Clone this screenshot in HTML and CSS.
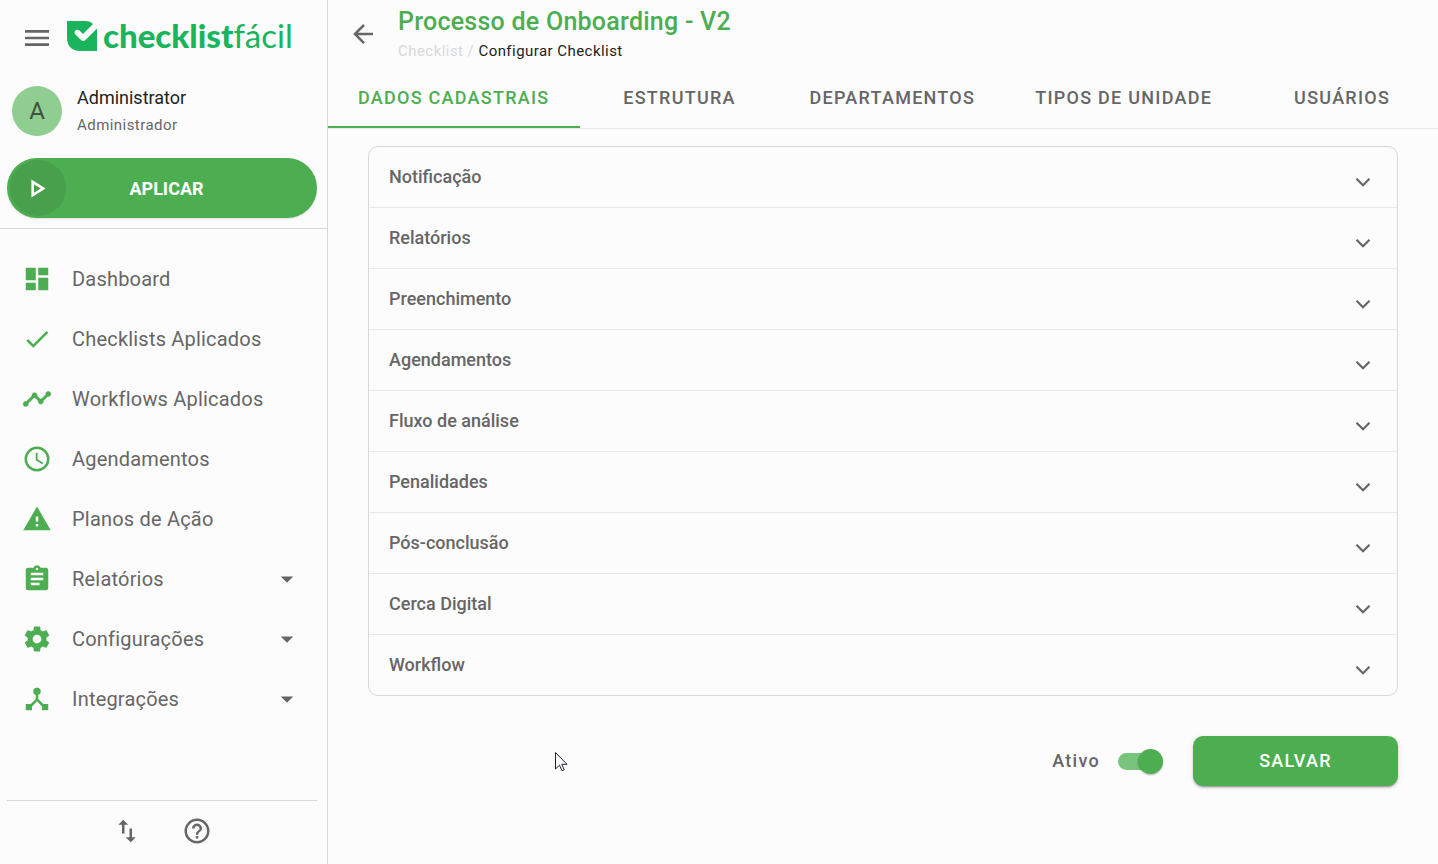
FILE: index.html
```html
<!DOCTYPE html>
<html lang="pt-BR">
<head>
  <meta charset="UTF-8">
  <meta name="viewport" content="width=device-width, initial-scale=1">
  <title>Processo de Onboarding - V2</title>
  <link rel="stylesheet" href="styles.css">
</head>
<body>
  <div class="app">
    <aside class="sidebar">
      <div class="brand">
        <button class="icon-btn" type="button" aria-label="Menu">
          <svg class="icon-lg" viewBox="0 0 24 24"><path d="M3,6H21V8H3V6M3,11H21V13H3V11M3,16H21V18H3V16Z"/></svg>
        </button>
        <a class="logo" href="#">
          <svg class="logo-mark" viewBox="0 0 30 30">
            <path d="M0 0H18C22 0 24 1 26 3L16 13L12.500 9.500C9.500 7 6 10.500 8.500 13.500L14 19C15.500 20.500 17 20.500 18.500 19L30 7.500V30H13C5 30 0 25 0 17Z"/>
          </svg>
          <span class="logo-text"><b>checklist</b>fácil</span>
        </a>
      </div>

      <div class="user">
        <div class="avatar">A</div>
        <div>
          <div class="user-name">Administrator</div>
          <div class="user-role">Administrador</div>
        </div>
      </div>

      <div class="apply">
        <button class="apply-btn" type="button">
          <span class="apply-icon">
            <svg class="icon" viewBox="0 0 24 24"><path d="M8.5,8.64L13.77,12L8.5,15.36V8.64M6.5,5V19L17.5,12"/></svg>
          </span>
          <span class="apply-label">APLICAR</span>
        </button>
      </div>

      <nav class="nav">
        <a class="nav-item" href="#">
          <svg class="icon" viewBox="0 0 24 24"><path d="M13,3V9H21V3M13,21H21V11H13M3,21H11V15H3M3,13H11V3H3V13Z"/></svg>
          <span class="nav-label">Dashboard</span>
        </a>
        <a class="nav-item" href="#">
          <svg class="icon" viewBox="0 0 24 24"><path d="M21,7L9,19L3.5,13.5L4.91,12.09L9,16.17L19.59,5.59L21,7Z"/></svg>
          <span class="nav-label">Checklists Aplicados</span>
        </a>
        <a class="nav-item" href="#">
          <svg class="icon" viewBox="0 0 24 24"><path stroke="currentColor" stroke-width=".5" d="M23,8C23,9.1 22.1,10 21,10C20.82,10 20.65,9.98 20.49,9.93L16.93,13.48C16.98,13.64 17,13.82 17,14C17,15.1 16.1,16 15,16C13.9,16 13,15.1 13,14C13,13.82 13.02,13.64 13.07,13.48L10.52,10.93C10.36,10.98 10.18,11 10,11C9.82,11 9.64,10.98 9.48,10.93L4.93,15.49C4.98,15.65 5,15.82 5,16C5,17.1 4.1,18 3,18C1.9,18 1,17.1 1,16C1,14.9 1.9,14 3,14C3.18,14 3.35,14.02 3.51,14.07L8.07,9.52C8.02,9.36 8,9.18 8,9C8,7.9 8.9,7 10,7C11.1,7 12,7.9 12,9C12,9.18 11.98,9.36 11.93,9.52L14.48,12.07C14.64,12.02 14.82,12 15,12C15.18,12 15.36,12.02 15.52,12.07L19.07,8.51C19.02,8.35 19,8.18 19,8C19,6.9 19.9,6 21,6C22.1,6 23,6.9 23,8Z"/></svg>
          <span class="nav-label">Workflows Aplicados</span>
        </a>
        <a class="nav-item" href="#">
          <svg class="icon" viewBox="0 0 24 24"><path d="M12,20A8,8 0 0,0 20,12A8,8 0 0,0 12,4A8,8 0 0,0 4,12A8,8 0 0,0 12,20M12,2A10,10 0 0,1 22,12A10,10 0 0,1 12,22C6.47,22 2,17.5 2,12A10,10 0 0,1 12,2M12.5,7V12.25L17,14.92L16.25,16.15L11,13V7H12.5Z"/></svg>
          <span class="nav-label">Agendamentos</span>
        </a>
        <a class="nav-item" href="#">
          <svg class="icon" viewBox="0 0 24 24"><path d="M13,14H11V10H13M13,18H11V16H13M1,21H23L12,2L1,21Z"/></svg>
          <span class="nav-label">Planos de Ação</span>
        </a>
        <a class="nav-item" href="#">
          <svg class="icon" viewBox="0 0 24 24"><path d="M17,9H7V7H17M17,13H7V11H17M14,17H7V15H14M12,3A1,1 0 0,1 13,4A1,1 0 0,1 12,5A1,1 0 0,1 11,4A1,1 0 0,1 12,3M19,3H14.82C14.4,1.84 13.3,1 12,1C10.7,1 9.6,1.84 9.18,3H5A2,2 0 0,0 3,5V19A2,2 0 0,0 5,21H19A2,2 0 0,0 21,19V5A2,2 0 0,0 19,3Z"/></svg>
          <span class="nav-label">Relatórios</span>
          <svg class="caret" viewBox="0 0 24 24"><path d="M7,10L12,15L17,10H7Z"/></svg>
        </a>
        <a class="nav-item" href="#">
          <svg class="icon" viewBox="0 0 24 24"><path d="M12,15.5A3.5,3.5 0 0,1 8.5,12A3.5,3.5 0 0,1 12,8.5A3.5,3.5 0 0,1 15.5,12A3.5,3.5 0 0,1 12,15.5M19.43,12.97C19.47,12.65 19.5,12.33 19.5,12C19.5,11.67 19.47,11.34 19.43,11L21.54,9.37C21.73,9.22 21.78,8.95 21.66,8.73L19.66,5.27C19.54,5.05 19.27,4.96 19.05,5.05L16.56,6.05C16.04,5.66 15.5,5.32 14.87,5.07L14.5,2.42C14.46,2.18 14.25,2 14,2H10C9.75,2 9.54,2.18 9.5,2.42L9.13,5.07C8.5,5.32 7.96,5.66 7.44,6.05L4.95,5.05C4.73,4.96 4.46,5.05 4.34,5.27L2.34,8.73C2.21,8.95 2.27,9.22 2.46,9.37L4.57,11C4.53,11.34 4.5,11.67 4.5,12C4.5,12.33 4.53,12.65 4.57,12.97L2.46,14.63C2.27,14.78 2.21,15.05 2.34,15.27L4.34,18.73C4.46,18.95 4.73,19.03 4.95,18.95L7.44,17.94C7.96,18.34 8.5,18.68 9.13,18.93L9.5,21.58C9.54,21.82 9.75,22 10,22H14C14.25,22 14.46,21.82 14.5,21.58L14.87,18.93C15.5,18.67 16.04,18.34 16.56,17.94L19.05,18.95C19.27,19.03 19.54,18.95 19.66,18.73L21.66,15.27C21.78,15.05 21.73,14.78 21.54,14.63L19.43,12.97Z"/></svg>
          <span class="nav-label">Configurações</span>
          <svg class="caret" viewBox="0 0 24 24"><path d="M7,10L12,15L17,10H7Z"/></svg>
        </a>
        <a class="nav-item" href="#">
          <svg class="icon" viewBox="0 0 24 24"><path d="M17,16L13,12V8.82C14.16,8.4 15,7.3 15,6A3,3 0 0,0 12,3A3,3 0 0,0 9,6C9,7.3 9.84,8.4 11,8.82V12L7,16H3V21H8V17.95L12,13.75L16,17.95V21H21V16H17Z"/></svg>
          <span class="nav-label">Integrações</span>
          <svg class="caret" viewBox="0 0 24 24"><path d="M7,10L12,15L17,10H7Z"/></svg>
        </a>
      </nav>

      <div class="sidebar-footer">
        <button class="icon-btn" type="button" aria-label="Transferências">
          <svg class="icon" viewBox="0 0 24 24"><path d="M9,3L5,7H8V14H10V7H13M16,17V10H14V17H11L15,21L19,17H16Z"/></svg>
        </button>
        <button class="icon-btn" type="button" aria-label="Ajuda">
          <svg class="icon" viewBox="0 0 24 24"><path d="M11,18H13V16H11V18M12,2A10,10 0 0,0 2,12A10,10 0 0,0 12,22A10,10 0 0,0 22,12A10,10 0 0,0 12,2M12,20C7.59,20 4,16.41 4,12C4,7.59 7.59,4 12,4C16.41,4 20,7.59 20,12C20,16.41 16.41,20 12,20M12,6A4,4 0 0,0 8,10H10A2,2 0 0,1 12,8A2,2 0 0,1 14,10C14,12 11,11.75 11,15H13C13,12.75 16,12.5 16,10A4,4 0 0,0 12,6Z"/></svg>
        </button>
      </div>
    </aside>

    <main class="main">
      <header class="page-header">
        <button class="icon-btn" type="button" aria-label="Voltar">
          <svg class="icon" viewBox="0 0 24 24"><path d="M20,11V13H8L13.5,18.5L12.08,19.92L4.16,12L12.08,4.08L13.5,5.5L8,11H20Z"/></svg>
        </button>
        <div class="page-heading">
          <h1 class="page-title">Processo de Onboarding - V2</h1>
          <div class="breadcrumb"><a href="#">Checklist</a> / <span class="current">Configurar Checklist</span></div>
        </div>
      </header>

      <div class="tabs" role="tablist">
        <button class="tab active" type="button" role="tab" aria-selected="true">DADOS CADASTRAIS</button>
        <button class="tab" type="button" role="tab">ESTRUTURA</button>
        <button class="tab" type="button" role="tab">DEPARTAMENTOS</button>
        <button class="tab" type="button" role="tab">TIPOS DE UNIDADE</button>
        <button class="tab" type="button" role="tab">USUÁRIOS</button>
      </div>

      <form class="content">
        <div class="panels">
          <button class="panel" type="button" aria-expanded="false">Notificação <svg class="chevron" viewBox="0 0 24 24"><path d="M6 9L12 15L18 9"/></svg></button>
          <button class="panel" type="button" aria-expanded="false">Relatórios <svg class="chevron" viewBox="0 0 24 24"><path d="M6 9L12 15L18 9"/></svg></button>
          <button class="panel" type="button" aria-expanded="false">Preenchimento <svg class="chevron" viewBox="0 0 24 24"><path d="M6 9L12 15L18 9"/></svg></button>
          <button class="panel" type="button" aria-expanded="false">Agendamentos <svg class="chevron" viewBox="0 0 24 24"><path d="M6 9L12 15L18 9"/></svg></button>
          <button class="panel" type="button" aria-expanded="false">Fluxo de análise <svg class="chevron" viewBox="0 0 24 24"><path d="M6 9L12 15L18 9"/></svg></button>
          <button class="panel" type="button" aria-expanded="false">Penalidades <svg class="chevron" viewBox="0 0 24 24"><path d="M6 9L12 15L18 9"/></svg></button>
          <button class="panel" type="button" aria-expanded="false">Pós-conclusão <svg class="chevron" viewBox="0 0 24 24"><path d="M6 9L12 15L18 9"/></svg></button>
          <button class="panel" type="button" aria-expanded="false">Cerca Digital <svg class="chevron" viewBox="0 0 24 24"><path d="M6 9L12 15L18 9"/></svg></button>
          <button class="panel" type="button" aria-expanded="false">Workflow <svg class="chevron" viewBox="0 0 24 24"><path d="M6 9L12 15L18 9"/></svg></button>
        </div>

        <div class="actions">
          <label class="switch-label" for="ativo">Ativo</label>
          <input class="switch" type="checkbox" id="ativo" checked>
          <button class="save-btn" type="button">SALVAR</button>
        </div>
      </form>
    </main>
  </div>

  <svg class="cursor" viewBox="0 0 12 20"><path d="M.5 .5V17L4.5 13.2L7 18.8L9.2 17.8L6.8 12.3H12Z"/></svg>
</body>
</html>
```
FILE: styles.css
```css
* {
  box-sizing: border-box;
}

body {
  margin: 0;
  background: #fcfcfc;
  color: #666;
  font-family: Roboto, "Liberation Sans", sans-serif;
}

button {
  padding: 0;
  border: none;
  background: none;
  color: inherit;
  font-family: inherit;
  cursor: pointer;
}

a {
  color: inherit;
  text-decoration: none;
}

svg {
  display: block;
  flex: none;
  fill: currentColor;
}

.icon {
  width: 30px;
  height: 30px;
}

.icon-lg {
  width: 32px;
  height: 32px;
}

.app {
  display: flex;
  min-height: 100vh;
}

/* Sidebar */
.sidebar {
  display: flex;
  flex-direction: column;
  flex: none;
  width: 328px;
  border-right: 1px solid #d8d8d8;
}

.brand {
  display: flex;
  align-items: center;
  gap: 14px;
  height: 76px;
  padding-left: 21px;
}

.logo {
  display: flex;
  align-items: center;
  gap: 6px;
  padding-bottom: 4px;
  color: #19b45b;
}

.logo-mark {
  width: 30px;
  height: 30px;
}

.logo-text {
  padding-bottom: 2px;
  font-family: Lato, sans-serif;
  font-size: 33px;
  font-weight: 400;
  line-height: 36px;
}

.logo-text b {
  font-weight: 900;
}

.user {
  display: flex;
  align-items: center;
  gap: 15px;
  height: 70px;
  padding-left: 12px;
}

.avatar {
  width: 50px;
  height: 50px;
  border-radius: 50%;
  background: #8fcd91;
  color: #3f5340;
  font-size: 24px;
  line-height: 50px;
  text-align: center;
}

.user-name {
  color: #222;
  font-size: 18px;
  line-height: 28px;
}

.user-role {
  font-size: 15px;
  line-height: 26px;
  letter-spacing: 0.03em;
}

.apply {
  padding: 12px 10px 10px 7px;
  border-bottom: 1px solid #d8d8d8;
}

.apply-btn {
  display: flex;
  align-items: center;
  width: 100%;
  height: 60px;
  padding: 0 50px 0 3px;
  border-radius: 30px;
  background: #4cae50;
  box-shadow: 0 1px 2px rgba(0, 0, 0, 0.12);
  color: #fff;
}

.apply-icon {
  display: flex;
  align-items: center;
  justify-content: center;
  width: 56px;
  height: 56px;
  border-radius: 50%;
  background: #489f4c;
}

.apply-icon .icon {
  width: 31px;
  height: 31px;
}

.apply-label {
  flex: 1;
  font-size: 18px;
  font-weight: 700;
}

.nav {
  flex: 1;
  padding-top: 20px;
}

.nav-item {
  display: flex;
  align-items: center;
  gap: 20px;
  height: 60px;
  padding: 0 25px 0 22px;
  font-size: 20px;
}

.nav-item .icon {
  color: #4cae50;
}

.nav-label {
  flex: 1;
  letter-spacing: 0.01em;
}

.caret {
  width: 30px;
  height: 30px;
}

.sidebar-footer {
  display: flex;
  justify-content: center;
  gap: 40px;
  margin: 0 10px 0 7px;
  padding: 15px 0 18px;
  border-top: 1px solid #d8d8d8;
}

/* Page */
.main {
  flex: 1;
  min-width: 0;
}

.page-header {
  display: flex;
  align-items: center;
  gap: 20px;
  height: 68px;
  padding-left: 20px;
}

.page-heading {
  padding-top: 2px;
}

.page-title {
  margin: 0;
  color: #4cae50;
  font-size: 25px;
  font-weight: 500;
  line-height: 32px;
  letter-spacing: 0.01em;
}

.breadcrumb {
  color: #d8d8d8;
  font-size: 15px;
  line-height: 26px;
  letter-spacing: 0.03em;
}

.breadcrumb .current {
  color: #222;
}

.tabs {
  display: flex;
  height: 61px;
  overflow: hidden;
  border-bottom: 1px solid #e8e8e8;
}

.tab {
  flex: none;
  min-width: 200px;
  padding: 0 30px;
  border-bottom: 2px solid transparent;
  font-size: 18px;
  font-weight: 500;
  letter-spacing: 0.07em;
}

.tab.active {
  border-bottom-color: #4cae50;
  color: #4cae50;
}

.content {
  padding: 17px 40px;
}

.panels {
  border: 1px solid #d8d8d8;
  border-radius: 10px;
}

.panel {
  display: flex;
  align-items: center;
  justify-content: space-between;
  width: 100%;
  height: 61px;
  padding: 0 21px 2px 20px;
  border-bottom: 1px solid #e8e8e8;
  font-size: 18px;
  font-weight: 500;
}

.panel:last-child {
  height: 60px;
  border-bottom: none;
}

.chevron {
  width: 26px;
  height: 38px;
  padding-top: 12px;
  fill: none;
  stroke: currentColor;
  stroke-width: 2;
}

.actions {
  display: flex;
  align-items: center;
  justify-content: flex-end;
  padding-top: 40px;
}

.switch-label {
  padding-bottom: 2px;
  font-size: 18px;
  font-weight: 500;
  letter-spacing: 0.07em;
}

.switch {
  appearance: none;
  display: flex;
  align-items: center;
  justify-content: flex-end;
  width: 43px;
  height: 17px;
  margin: 0 32px 0 18px;
  border-radius: 9px;
  background: #79c47c;
}

.switch::before {
  content: "";
  flex: none;
  width: 25px;
  height: 25px;
  margin-right: -2px;
  border-radius: 50%;
  background: #4cae50;
  box-shadow: 0 1px 2px rgba(0, 0, 0, 0.3);
}

.switch:not(:checked) {
  justify-content: flex-start;
  background: #bbb;
}

.save-btn {
  width: 205px;
  height: 50px;
  padding-bottom: 2px;
  border-radius: 10px;
  background: #4cae50;
  box-shadow: 0 3px 1px -2px rgba(0, 0, 0, 0.2), 0 2px 2px rgba(0, 0, 0, 0.14), 0 1px 5px rgba(0, 0, 0, 0.12);
  color: #fff;
  font-size: 18px;
  font-weight: 500;
  letter-spacing: 0.07em;
}

/* Mouse pointer lying over the page */
.cursor {
  position: absolute;
  left: 555px;
  top: 752px;
  width: 12px;
  height: 20px;
  overflow: visible;
  fill: #fff;
  stroke: #223;
}
```
